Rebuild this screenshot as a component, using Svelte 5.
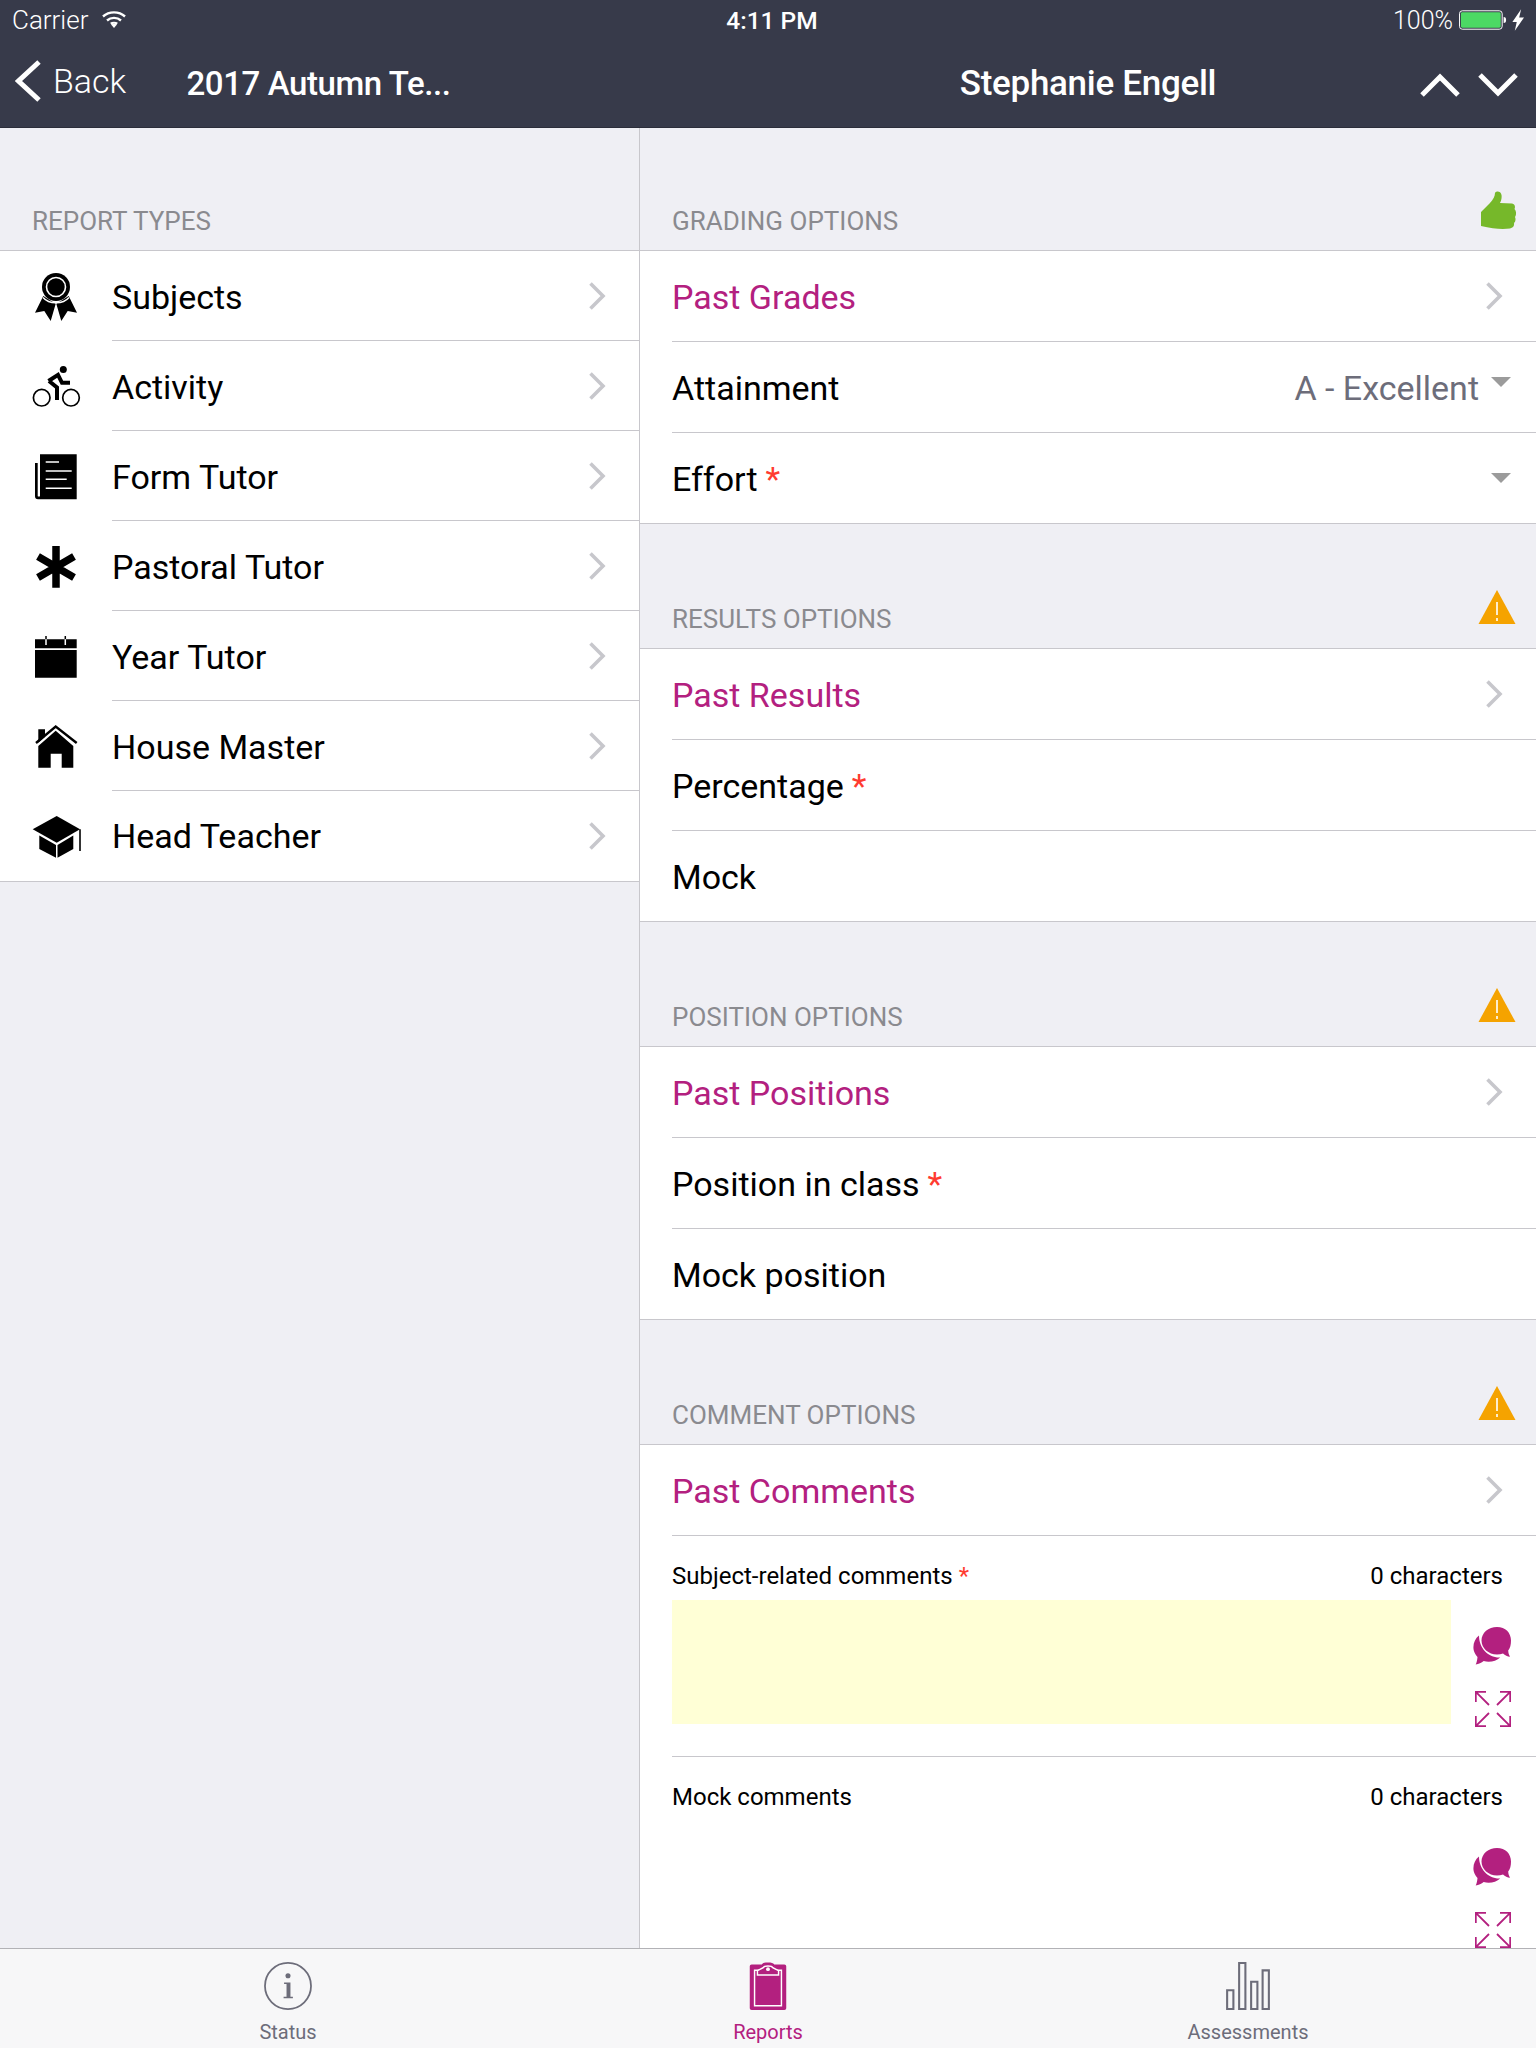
<script>
  const reportTypes = [
    { label: 'Subjects', icon: 'ribbon' },
    { label: 'Activity', icon: 'bike' },
    { label: 'Form Tutor', icon: 'news' },
    { label: 'Pastoral Tutor', icon: 'star' },
    { label: 'Year Tutor', icon: 'calendar' },
    { label: 'House Master', icon: 'house' },
    { label: 'Head Teacher', icon: 'cap' }
  ];

  const sections = [
    {
      title: 'Grading options',
      status: 'ok',
      rows: [
        { label: 'Past Grades', link: true },
        { label: 'Attainment', value: 'A - Excellent', select: true },
        { label: 'Effort', required: true, select: true }
      ]
    },
    {
      title: 'Results options',
      status: 'warn',
      rows: [
        { label: 'Past Results', link: true },
        { label: 'Percentage', required: true },
        { label: 'Mock' }
      ]
    },
    {
      title: 'Position options',
      status: 'warn',
      rows: [
        { label: 'Past Positions', link: true },
        { label: 'Position in class', required: true },
        { label: 'Mock position' }
      ]
    }
  ];
</script>

{#snippet chevron()}
  <svg class="chevron" viewBox="0 0 18 30" aria-hidden="true"><path d="M2.5 2.5 15 15 2.5 27.5" /></svg>
{/snippet}

{#snippet bubbles()}
  <svg class="bubbles" viewBox="0 0 38 38" aria-hidden="true">
    <path d="M6 8.5C1.500 12-.5 18 .8 23.500c.8 3 2.300 5 3.700 6.500-.2 2.800-.8 5.500-1.800 7.500 3-.5 5.800-1.700 8-3.400 6 1.800 12.500 0 16.500-3.600C15 31 6 21 6 8.500Z" />
    <path d="M24 0C15.500 0 8.500 5.800 8.500 13.500S15.500 27.500 24 27.500c2.200 0 4.200-.4 6-1.100 2 1.700 4.500 3 7 3.300-1-1.700-1.700-3.700-1.800-6.200 2-2.500 2.800-5.500 2.800-10C38 5.800 32.500 0 24 0Z" />
  </svg>
{/snippet}

{#snippet expand()}
  <svg class="expand" viewBox="0 0 36 36" aria-hidden="true">
    <path d="M.8 11V.8H11M.8.800 14 14M25 .8h10.200V11M35.200.8 22 14M.8 25v10.200H11M.8 35.200 14 22M35.200 25v10.200H25M35.200 35.200 22 22" />
  </svg>
{/snippet}

{#snippet warning()}
  <svg class="status" viewBox="0 0 38 36" aria-hidden="true">
    <path d="M19 1 37.500 35H.5Z" fill="#f5a300" />
    <path d="M19 13v13M19 29v3" stroke="#fff" stroke-width="1.600" fill="none" />
  </svg>
{/snippet}

{#snippet thumb()}
  <svg class="status thumb" viewBox="0 0 35 38" aria-hidden="true">
    <path fill="#76b82a" d="M0 21 9 12c3-3 5-7 5-10 1-2.500 6-2 6.500 2 .5 3-.5 6-1.500 8l12 .5c3 .5 3.500 3.500 2.500 5.500 2 2 2 6 .5 8 1 2 .5 5-1 6 .5 3-1 5-4 5.500-7 1-17 .5-29-2.500Z" />
  </svg>
{/snippet}

{#snippet reportIcon(name)}
  <svg class="report-icon" viewBox="0 0 60 60" aria-hidden="true">
    {#if name === 'ribbon'}
      <path d="M17.300 30 9 46.700 18.300 45l6.400 10 5-17.300Z" />
      <path d="M42.700 30 51 46.700 41.700 45l-6.400 10-5-17.300Z" />
      <circle cx="30" cy="21" r="14" />
      <circle cx="30" cy="21" r="9.500" fill="none" stroke="#fff" stroke-width="1.600" />
      <path d="M17 31.500c3 3.500 8 5.300 13 5.300s10-1.800 13-5.300" fill="none" stroke="#fff" stroke-width="1.400" />
    {:else if name === 'bike'}
      <circle cx="15.700" cy="41.700" r="8.300" fill="none" stroke="#000" stroke-width="1.700" />
      <circle cx="45" cy="41.700" r="8.300" fill="none" stroke="#000" stroke-width="1.700" />
      <circle cx="37.300" cy="13.500" r="3.500" />
      <path d="M22.500 25 32 18.800l4 8h8M23 25l8 6.500V44" fill="none" stroke="#000" stroke-width="4" />
    {:else if name === 'news'}
      <path d="M14 8.300h36.700v45H12c-2 0-3-1.300-3-3V17h2.700v33c0 .8 2.300.8 2.300 0Z" />
      <path d="M19.700 16H33M19.700 25h26M19.700 33.300h21M19.700 42.300h26" stroke="#fff" stroke-width="1.600" fill="none" />
    {:else if name === 'star'}
      <path d="M30 10v41.700M12 20.600l36 20.800M48 20.600 12 41.400" stroke="#000" stroke-width="7.500" fill="none" />
    {:else if name === 'calendar'}
      <path d="M9 13.300h41.700v9H9ZM9 24h41.700v27.700H9Z" />
      <path d="M20 10v3.300M39.300 10v3.300" stroke="#000" stroke-width="1.500" fill="none" />
      <path d="M20 13.300V19M39.300 13.300V19" stroke="#fff" stroke-width="1.500" fill="none" />
    {:else if name === 'house'}
      <path d="M10 27 29.700 10.500 50.700 27" fill="none" stroke="#000" stroke-width="2.400" />
      <path d="M12.300 13.300H19v7.500l-6.700 6Z" />
      <path d="M29.700 14.800 47.300 30v21.700H35.700V37.700h-11v14H12.300V30Z" />
    {:else}
      <path d="M6.700 23.300 30.700 10 54 23.300 30.700 36.700Z" />
      <path d="M13.300 29.500 30 39v12.700L13.300 43ZM47.300 29.500 31.500 39v12.700L47.300 43Z" />
      <path d="M54 23.300V45" stroke="#000" stroke-width="1.600" fill="none" />
    {/if}
  </svg>
{/snippet}

<div class="ipad">
  <header>
    <div class="status-bar">
      <div class="carrier">
        Carrier
        <svg viewBox="0 0 24 18" aria-hidden="true">
          <path d="M1 6.500C7 1 17 1 23 6.500M5 10.500c4-3.500 10-3.500 14 0M8.800 13.800C10.500 12.500 13.500 12.500 15.200 13.800" fill="none" stroke="#fff" stroke-width="2.400" />
          <path d="m12 18-3-3.400c2-1 4-1 6 0Z" fill="#fff" />
        </svg>
      </div>
      <div class="time">4:11 PM</div>
      <div class="battery">
        100%
        <svg viewBox="0 0 68 22" aria-hidden="true">
          <rect x=".5" y="1.500" width="44" height="19" rx="3" fill="none" stroke="#fff" />
          <rect x="2" y="3" width="41" height="16" rx="1.500" fill="#4cd964" />
          <path d="M46 8c2 0 2.500 1 2.500 3s-.5 3-2.500 3Z" fill="#fff" />
          <path d="M64 0 55 13h4.500L57.500 22 67 8.500h-5Z" fill="#fff" />
        </svg>
      </div>
    </div>
    <div class="nav-bars">
      <nav class="nav-left">
        <div class="back">
          <svg viewBox="0 0 26 42" aria-hidden="true"><path d="M24 2 3.500 21 24 40" /></svg>
          Back
        </div>
        <div class="title">2017 Autumn Te...</div>
      </nav>
      <nav class="nav-right">
        <div class="title">Stephanie Engell</div>
        <div class="arrows">
          <svg viewBox="0 0 40 24" aria-hidden="true"><path d="M2 22 20 4l18 18" /></svg>
          <svg viewBox="0 0 40 24" aria-hidden="true"><path d="M2 2l18 18L38 2" /></svg>
        </div>
      </nav>
    </div>
  </header>

  <main>
    <aside>
      <div class="section-head"><span>Report types</span></div>
      <ul class="report-list">
        {#each reportTypes as item}
          <li>
            {@render reportIcon(item.icon)}
            <div class="report-row">
              <span>{item.label}</span>
              {@render chevron()}
            </div>
          </li>
        {/each}
      </ul>
    </aside>

    <section class="detail">
      {#each sections as section}
        <div class="section-head">
          <span>{section.title}</span>
          {#if section.status === 'ok'}{@render thumb()}{:else}{@render warning()}{/if}
        </div>
        <div class="group">
          {#each section.rows as row}
            <div class="row" class:link={row.link}>
              <span class="row-label">{row.label}{#if row.required}<b>*</b>{/if}</span>
              {#if row.link}{@render chevron()}{/if}
              {#if row.select}
                <span class="select">
                  {#if row.value}<span class="value">{row.value}</span>{/if}
                  <i class="caret" class:raised={row.value}></i>
                </span>
              {/if}
            </div>
          {/each}
        </div>
      {/each}

      <div class="section-head">
        <span>Comment options</span>
        {@render warning()}
      </div>
      <div class="group">
        <div class="row link">
          <span class="row-label">Past Comments</span>
          {@render chevron()}
        </div>
        <div class="comment">
          <div class="comment-head">
            <span>Subject-related comments<b>*</b></span>
            <span>0 characters</span>
          </div>
          <div class="comment-body">
            <div class="comment-box filled"></div>
            <div class="comment-tools">{@render bubbles()}{@render expand()}</div>
          </div>
        </div>
        <div class="comment">
          <div class="comment-head">
            <span>Mock comments</span>
            <span>0 characters</span>
          </div>
          <div class="comment-body">
            <div class="comment-box"></div>
            <div class="comment-tools">{@render bubbles()}{@render expand()}</div>
          </div>
        </div>
      </div>
    </section>
  </main>

  <footer>
    <div class="tab">
      <svg viewBox=".5 .5 49 49" aria-hidden="true">
        <circle cx="25" cy="25" r="23.500" fill="none" stroke="#6d6d7a" stroke-width="1.800" />
        <circle cx="25" cy="14.500" r="2.600" fill="#6d6d7a" />
        <path d="M21 21.500h6.500v14.500H30v1.500H20.500V36h3V23h-2.500Z" fill="#6d6d7a" />
      </svg>
      <span>Status</span>
    </div>
    <div class="tab active">
      <svg viewBox="0 -2 38 50" aria-hidden="true">
        <path d="M2 .5h10.500C13.500-1 15.500-1.500 19-1.500s5.500.5 6.500 2H36c1.200 0 2 .8 2 2V46c0 1.200-.8 2-2 2H2c-1.200 0-2-.8-2-2V2.500C0 1.300.8.500 2 .5Z" fill="#b3207f" />
        <path d="M11 6.500H5v37h28v-37h-6" fill="none" stroke="#fff" stroke-width="1.500" />
        <path d="M8 11.500V7l6-3c1-2.500 9-2.500 10 0l6 3v4.500Z" fill="#b3207f" stroke="#fff" stroke-width="1.500" />
        <circle cx="19" cy="5.500" r="2" fill="#fff" />
      </svg>
      <span>Reports</span>
    </div>
    <div class="tab">
      <svg viewBox="0 0 42 46" aria-hidden="true">
        <path d="M1 27h6v18H1ZM12.500 1h6v44h-6ZM24 19h6v26h-6ZM35 8h6v37h-6Z" fill="none" stroke="#6d6d7a" stroke-width="2" />
      </svg>
      <span>Assessments</span>
    </div>
  </footer>
</div>

<style>
  :global(body) { margin: 0; }

  .ipad {
    width: 1536px;
    height: 2048px;
    display: flex;
    flex-direction: column;
    overflow: hidden;
    background: #efeff4;
    font-family: Roboto, "Liberation Sans", sans-serif;
    color: #000;
  }

  header { height: 127px; flex: none; background: #373a4a; color: #fff; border-bottom: 1px solid #2b2d3a; }
  .status-bar { height: 40px; display: grid; grid-template-columns: 1fr auto 1fr; align-items: center; font-size: 24.5px; padding: 0 12px; }
  .carrier { display: flex; align-items: center; gap: 14px; font-weight: 300; font-size: 26px; }
  .carrier svg { width: 24px; height: 18px; margin-top: -2px; }
  .time { font-weight: 500; margin-left: 8px; }
  .battery { display: flex; align-items: center; justify-content: flex-end; gap: 6px; font-weight: 300; font-size: 25px; margin-right: -1px; }
  .battery svg { width: 66px; height: 22px; }

  .nav-bars { display: flex; height: 87px; }
  .nav-left { width: 640px; flex: none; position: relative; display: flex; align-items: center; justify-content: center; box-sizing: border-box; }
  .nav-right { flex: 1; position: relative; display: flex; align-items: center; justify-content: center; }
  .title { font-size: 35px; font-weight: 500; letter-spacing: -.3px; }
  .nav-left .title { font-size: 33px; letter-spacing: -.4px; margin-left: -3px; }
  .back { position: absolute; left: 15px; top: 20px; display: flex; align-items: center; gap: 12px; font-size: 34px; font-weight: 300; }
  .back svg { width: 26px; height: 42px; fill: none; stroke: #fff; stroke-width: 5; }
  .arrows { position: absolute; right: 18px; top: 33px; display: flex; gap: 18px; }
  .arrows svg { width: 40px; height: 24px; fill: none; stroke: #fff; stroke-width: 5; }

  main { flex: 1; min-height: 0; display: flex; }
  aside { width: 639px; flex: none; border-right: 1px solid #c8c7cc; }
  .detail { flex: 1; min-width: 0; overflow: hidden; }

  .section-head {
    height: 123px;
    box-sizing: border-box;
    padding: 0 20px 14px 32px;
    display: flex;
    align-items: flex-end;
    justify-content: space-between;
    font-size: 26px;
    line-height: 30px;
    color: #8a8a8f;
    text-transform: uppercase;
    border-bottom: 1px solid #c8c7cc;
  }
  .detail .section-head { height: 125px; }
  .detail > .section-head:first-child { height: 123px; }

  .status { width: 38px; height: 38px; margin-bottom: 8px; flex: none; }
  .status.thumb { width: 35px; margin-bottom: 7px; }

  .report-list { list-style: none; margin: 0; padding: 0; background: #fff; border-bottom: 1px solid #c8c7cc; }
  .report-list li { display: flex; height: 90px; align-items: stretch; }
  .report-icon { width: 60px; height: 60px; flex: none; margin: 15px 26px 0 26px; }
  .report-row { flex: 1; display: flex; align-items: center; justify-content: space-between; padding-right: 33px; font-size: 34px; border-bottom: 1px solid #c8c7cc; }
  .report-row span { padding-top: 2px; }
  .report-list li:last-child .report-row { border-bottom: 0; }
  .report-list li:last-child .report-row span { padding-top: 0; }
  .chevron { width: 18px; height: 30px; fill: none; stroke: #c7c7cc; stroke-width: 3.600; flex: none; }

  .group { background: #fff; border-bottom: 1px solid #c8c7cc; padding-left: 32px; }
  .row {
    height: 91px;
    box-sizing: border-box;
    display: flex;
    align-items: center;
    justify-content: space-between;
    padding-right: 33px;
    font-size: 34px;
    border-bottom: 1px solid #c8c7cc;
  }
  .row-label, .value { padding-top: 2px; }
  .group > .row:last-child { border-bottom: 0; height: 90px; }
  .row.link { color: #b3207f; }
  .row-label b, .comment-head b { color: #ff3b30; font-weight: 400; margin-left: 8px; }
  .comment-head b { margin-left: 6px; }
  .select { display: flex; align-items: center; margin-right: -8px; }
  .value { color: #6d6d7a; }
  .caret { width: 0; height: 0; margin-left: 12px; border: 10px solid transparent; border-top: 10px solid #9b9b9b; border-bottom: 0; }
  .caret.raised { margin-bottom: 10px; }

  .comment { padding: 24px 0 0; }
  .comment-head { display: flex; justify-content: space-between; padding-right: 33px; font-size: 24px; line-height: 32px; }
  .comment-body { display: flex; margin-top: 8px; height: 156px; border-bottom: 1px solid #c8c7cc; }
  .comment-box { width: 779px; height: 124px; flex: none; }
  .comment-box.filled { background: #ffffd6; }
  .comment-tools { flex: 1; display: flex; flex-direction: column; align-items: center; margin-left: -3px; }
  .bubbles { width: 38px; height: 38px; fill: #b3207f; margin-top: 27px; }
  .expand { width: 36px; height: 36px; margin: 26px 0 0 2px; fill: none; stroke: #b3207f; stroke-width: 1.800; }

  footer { height: 100px; flex: none; box-sizing: border-box; background: #f7f7f8; border-top: 1px solid #b2b2b6; display: flex; justify-content: center; position: relative; }
  .tab { width: 480px; display: flex; flex-direction: column; align-items: center; color: #6d6d7a; font-size: 20px; }
  .tab svg { height: 48px; width: 50px; margin-top: 13px; }
  .tab span { margin-top: 10px; line-height: 24px; }
  .tab.active { color: #b3207f; }
</style>
